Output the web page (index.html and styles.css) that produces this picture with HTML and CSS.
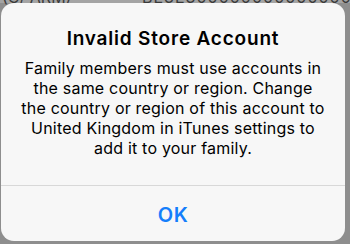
FILE: index.html
```html
<!DOCTYPE html>
<html>
<head>
<meta charset="utf-8">
<link rel="stylesheet" href="styles.css">
</head>
<body>
<div class="backdrop">
  <span class="bg-left">(C/ ARM)</span>
  <span class="bg-right">BE3E3000000000000000 0</span>
</div>
<div class="alert">
  <div class="content">
    <h1 class="title">Invalid Store Account</h1>
    <p class="message">Family members must use accounts in<br>the same country or region. Change<br>the country or region of this account to<br>United Kingdom in iTunes settings to<br>add it to your family.</p>
  </div>
  <div class="actions">
    <button class="btn">OK</button>
  </div>
</div>
</body>
</html>
```
FILE: styles.css
```css
html, body {
  margin: 0;
  padding: 0;
}
body {
  width: 350px;
  height: 244px;
  background: #8e8e8e;
  position: relative;
  overflow: hidden;
  font-family: Inter, "Open Sans", "Liberation Sans", sans-serif;
}
.backdrop {
  position: absolute;
  top: -11px;
  left: 0;
  width: 350px;
  height: 14px;
  background: #a4a4a4;
  font-size: 16px;
  color: #3a3a3a;
  line-height: 16px;
  white-space: nowrap;
}
.bg-left { position: absolute; left: 2px; top: 0; }
.bg-right { position: absolute; left: 142px; top: 0; letter-spacing: 1px; }
.alert {
  position: absolute;
  top: 3px;
  left: 1px;
  width: 344px;
  height: 238px;
  background: #f7f7f7;
  border-radius: 13px;
  display: flex;
  flex-direction: column;
  overflow: hidden;
}
.content {
  height: 183px;
  padding: 25px 4px 0;
  box-sizing: border-box;
  border-bottom: 1px solid #d8d8d8;
  text-align: center;
}
.title {
  margin: 0;
  font-size: 19px;
  font-weight: 600;
  letter-spacing: 0.8px;
  line-height: 22px;
  color: #000;
}
.message {
  margin: 8px 0 0;
  font-size: 16px;
  letter-spacing: 0.2px;
  line-height: 20px;
  color: #000;
  white-space: nowrap;
}
.actions {
  flex: 1;
  display: flex;
  align-items: center;
  justify-content: center;
  padding-top: 3px;
}
.btn {
  background: none;
  border: none;
  padding: 0;
  font-family: inherit;
  font-size: 20px;
  font-weight: 600;
  letter-spacing: 0.5px;
  color: #147efb;
}
```
